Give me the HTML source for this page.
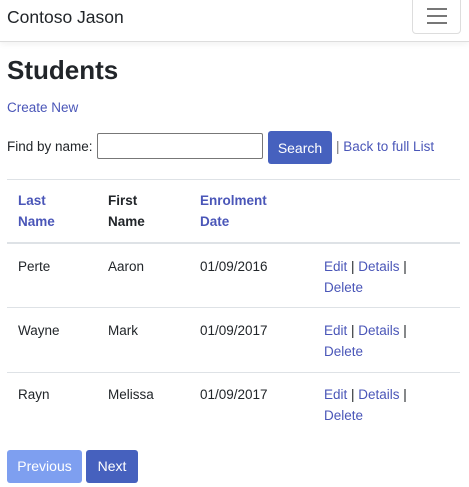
<!DOCTYPE html>
<html><head><style>
body{margin:0;width:469px;height:487px;background:#fff;font-family:"Liberation Sans",sans-serif;color:#212529;position:relative;overflow:hidden;font-size:13.5px;line-height:21px}
.a{position:absolute;white-space:nowrap}
a,.l{color:#4a56b8;text-decoration:none}
.nav{position:absolute;left:0;top:0;width:469px;height:41px;border-bottom:1px solid #ddd;box-shadow:0 2px 6px rgba(0,0,0,.06)}
.tog{position:absolute;left:412px;top:-5px;width:47px;height:37px;border:1px solid #ddd;border-radius:4px}
.tog i{position:absolute;left:14px;width:20px;height:2px;background:#777}
.hr{position:absolute;left:7px;width:453px;background:#dee2e6}
.btn{position:absolute;color:#fff;border-radius:3px;text-align:center;font-size:14px}
</style></head><body>
<div class="nav"><div class="a" style="left:7px;top:7px;font-size:17.5px">Contoso Jason</div>
<div class="tog"><i style="top:12px"></i><i style="top:19px"></i><i style="top:26px"></i></div></div>
<div class="a" style="left:7px;top:60px;font-size:26px;font-weight:bold">Students</div>
<div class="a l" style="left:7px;top:97px">Create New</div>
<div class="a" style="left:7px;top:136px">Find by name:</div>
<div class="a" style="left:97px;top:133px;width:164px;height:24px;border:1px solid #777;border-radius:2px"></div>
<div class="btn" style="left:268px;top:131px;width:64px;height:33px;line-height:35px;background:#4661be">Search</div>
<div class="a" style="left:336px;top:136px"><span style="color:#777">|</span> <span class="l">Back to full List</span></div>
<div class="hr" style="top:179px;height:1px"></div>
<div class="a l" style="left:18px;top:190px;font-weight:bold">Last<br>Name</div>
<div class="a" style="left:108px;top:190px;font-weight:bold">First<br>Name</div>
<div class="a l" style="left:200px;top:190px;font-weight:bold">Enrolment<br>Date</div>
<div class="hr" style="top:242px;height:2px"></div>
<div class="a" style="left:18px;top:256px">Perte</div>
<div class="a" style="left:108px;top:256px">Aaron</div>
<div class="a" style="left:200px;top:256px">01/09/2016</div>
<div class="a" style="left:324px;top:256px"><span class="l">Edit</span> | <span class="l">Details</span> |<br><span class="l">Delete</span></div>
<div class="hr" style="top:307px;height:1px"></div>
<div class="a" style="left:18px;top:320px">Wayne</div>
<div class="a" style="left:108px;top:320px">Mark</div>
<div class="a" style="left:200px;top:320px">01/09/2017</div>
<div class="a" style="left:324px;top:320px"><span class="l">Edit</span> | <span class="l">Details</span> |<br><span class="l">Delete</span></div>
<div class="hr" style="top:372px;height:1px"></div>
<div class="a" style="left:18px;top:384px">Rayn</div>
<div class="a" style="left:108px;top:384px">Melissa</div>
<div class="a" style="left:200px;top:384px">01/09/2017</div>
<div class="a" style="left:324px;top:384px"><span class="l">Edit</span> | <span class="l">Details</span> |<br><span class="l">Delete</span></div>
<div class="btn" style="left:7px;top:450px;width:75px;height:33px;line-height:33px;background:#7e9ff0">Previous</div>
<div class="btn" style="left:86px;top:450px;width:52px;height:33px;line-height:33px;background:#4661be">Next</div>
</body></html>
